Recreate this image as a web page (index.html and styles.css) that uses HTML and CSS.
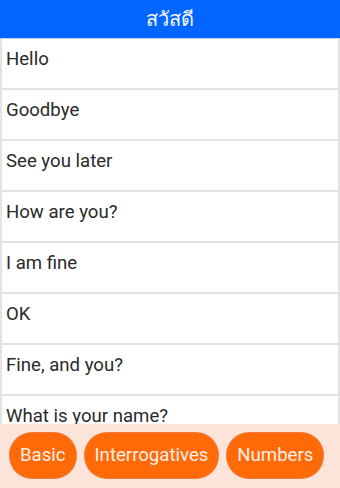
FILE: index.html
```html
<!DOCTYPE html>
<html lang="en">
<head>
<meta charset="utf-8">
<title>สวัสดี</title>
<link rel="stylesheet" href="styles.css">
</head>
<body>
<div class="app">
  <header class="title-bar">สวัสดี</header>
  <ul class="phrase-list">
    <li class="phrase">Hello</li>
    <li class="phrase">Goodbye</li>
    <li class="phrase">See you later</li>
    <li class="phrase">How are you?</li>
    <li class="phrase">I am fine</li>
    <li class="phrase">OK</li>
    <li class="phrase">Fine, and you?</li>
    <li class="phrase">What is your name?</li>
  </ul>
  <nav class="tabs">
    <button class="tab">Basic</button>
    <button class="tab">Interrogatives</button>
    <button class="tab">Numbers</button>
  </nav>
</div>
</body>
</html>
```

FILE: styles.css
```css
html, body {
  margin: 0;
  padding: 0;
  height: 100%;
}
body {
  font-family: Roboto, "Noto Sans", "DejaVu Sans", sans-serif;
  background: #ffffff;
}
.app {
  display: flex;
  flex-direction: column;
  height: 488px;
  width: 340px;
  overflow: hidden;
}
.title-bar {
  height: 38px;
  flex: 0 0 38px;
  background: #0066ff;
  color: #f4f7ff;
  font-size: 20px;
  display: flex;
  align-items: center;
  justify-content: center;
  border-bottom: 1px solid #c9cfe8;
  font-family: "Noto Sans", "DejaVu Sans", "Liberation Sans", sans-serif;
}
.phrase-list {
  list-style: none;
  margin: 0;
  padding: 0;
  flex: 1;
  min-height: 0;
  overflow: hidden;
  border-left: 2px solid #e3e3e3;
  border-right: 2px solid #e3e3e3;
}
.phrase {
  height: 51px;
  box-sizing: border-box;
  padding: 9px 4px 0;
  font-size: 18.6px;
  line-height: 22px;
  color: #2a2a2a;
  border-bottom: 2px solid #e3e3e3;
  white-space: nowrap;
}
.tabs {
  flex: 0 0 64px;
  height: 64px;
  background: #fde4da;
  display: flex;
  align-items: flex-start;
  gap: 9px;
  padding: 9px 0 0 10px;
  box-sizing: border-box;
}
.tab {
  height: 45px;
  border: none;
  border-radius: 22px;
  background: #ff6a08;
  color: #ffeee6;
  font-family: Roboto, "Noto Sans", sans-serif;
  font-size: 18.6px;
  line-height: 45px;
  padding: 0 10px;
  white-space: nowrap;
  flex: 0 0 auto;
  box-shadow: 0 0 0 1px #f07a3a;
}
```
